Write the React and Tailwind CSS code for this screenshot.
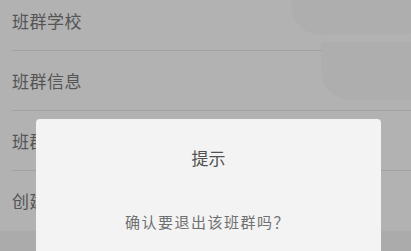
import React from "react";

const rows = [
  { label: "班群学校", line: "mr-[89px]" },
  { label: "班群信息", line: "" },
  { label: "班群名称", line: "" },
  { label: "创建时间", line: "border-none" },
];

const App = () => {
  return (
    <div
      className="relative w-[411px] h-[251px] overflow-hidden bg-[#b2b2b2]"
      style={{ fontFamily: '"Noto Sans CJK SC", "Noto Sans", sans-serif' }}
    >
      {/* faint ghost shape on the right */}
      <div className="absolute right-[-20px] top-[-10px] w-[140px] h-[45px] rounded-b-[30px] bg-[#aeaeae]" />
      <div className="absolute right-[-20px] top-[42px] w-[110px] h-[58px] rounded-bl-[30px] bg-[#aeaeae]" />

      <div className="relative -mt-[9px]">
        {rows.map((row) => (
          <div key={row.label} className={`h-[60px] ml-3 flex items-center border-b border-[#a2a2a2] ${row.line}`}>
            <span className="text-[17px] text-[#555555] tracking-[0.5px]">{row.label}</span>
          </div>
        ))}
        <div className="h-[30px] bg-[#ababab]" />
      </div>

      {/* dialog */}
      <div className="absolute left-[36px] top-[119px] w-[345px] h-[150px] rounded-t-[4px] bg-[#f3f3f3] flex flex-col items-center">
        <div className="mt-[27px] text-[17px] leading-[24px] text-[#525252]">提示</div>
        <div className="mt-[42px] text-[15px] leading-[20px] text-[#707070] tracking-[1.5px] ml-[-2px]">
          确认要退出该班群吗？
        </div>
      </div>
    </div>
  );
};

export default App;
